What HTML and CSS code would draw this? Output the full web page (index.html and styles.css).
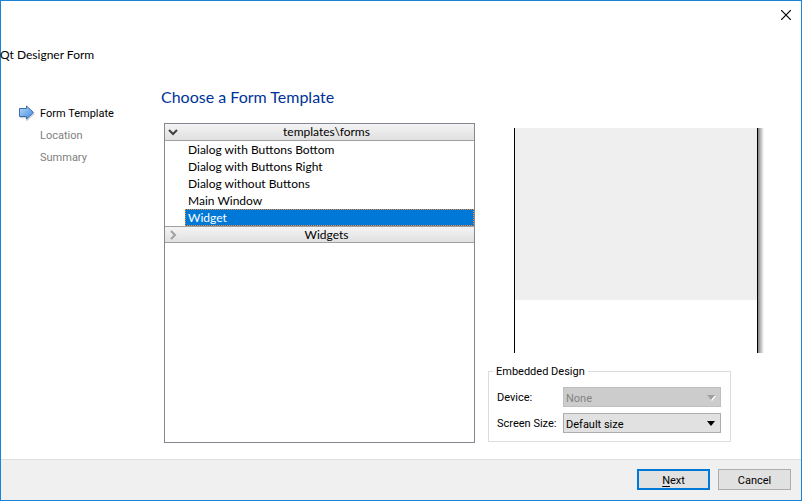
FILE: index.html
```html
<!DOCTYPE html>
<html lang="en">
<head>
<meta charset="utf-8">
<title>Qt Designer Form</title>
<link rel="stylesheet" href="styles.css">
</head>
<body>
<div class="window">
  <header class="titlebar">
    <button class="close" type="button" aria-label="Close">
      <svg width="10" height="10" viewBox="0 0 10 10" aria-hidden="true"><path d="M0 0L10 10M10 0L0 10" stroke="#000" stroke-width="1.2"/></svg>
    </button>
  </header>
  <h1 class="wizard-title">Qt Designer Form</h1>
  <div class="body">
    <nav class="steps">
      <ol>
        <li class="current">
          <svg class="step-arrow" width="18" height="16" viewBox="0 0 18 16" aria-hidden="true">
            <defs><linearGradient id="blue" x1="0" y1="0" x2="1" y2="1"><stop offset="0" stop-color="#b5dafb"/><stop offset="1" stop-color="#4087e2"/></linearGradient></defs>
            <path d="M2 12.5H9V15L16.500 8.500" fill="none" stroke="#d0d0d0" stroke-width="1.500"/>
            <path d="M1.500 3.500H8.500V1L15.500 7.500L8.500 14V11.500H1.500Z" fill="url(#blue)" stroke="#3a6ea8"/>
          </svg>
          Form Template
        </li>
        <li>Location</li>
        <li>Summary</li>
      </ol>
    </nav>
    <main class="page">
      <h2 class="page-title">Choose a Form Template</h2>
      <div class="columns">
        <div class="tree">
          <button class="group" type="button" aria-expanded="true">
            <svg class="chevron" width="10" height="10" viewBox="0 0 10 10" aria-hidden="true"><path d="M1 3L5 7L9 3" fill="none" stroke="#404040" stroke-width="2"/></svg>
            templates\forms
          </button>
          <ul class="items">
            <li>Dialog with Buttons Bottom</li>
            <li>Dialog with Buttons Right</li>
            <li>Dialog without Buttons</li>
            <li>Main Window</li>
            <li class="selected">Widget</li>
          </ul>
          <button class="group second" type="button" aria-expanded="false">
            <svg class="chevron" width="10" height="10" viewBox="0 0 10 10" aria-hidden="true"><path d="M3 1L7 5L3 9" fill="none" stroke="#a0a0a0" stroke-width="2"/></svg>
            Widgets
          </button>
        </div>
        <div class="side">
          <div class="preview"><div class="preview-form"></div><div class="preview-shadow"></div></div>
          <fieldset class="embedded">
            <legend>Embedded Design</legend>
            <label for="device">Device:</label>
            <div class="combo disabled">
              <select id="device" disabled><option>None</option></select>
              <svg class="drop" width="9" height="6" viewBox="0 0 9 6" aria-hidden="true"><path d="M1 1H9L5 6Z" fill="#fff"/><path d="M0 0H8L4 5Z" fill="#a0a0a0"/></svg>
            </div>
            <label for="size">Screen Size:</label>
            <div class="combo">
              <select id="size"><option>Default size</option></select>
              <svg class="drop" width="9" height="6" viewBox="0 0 9 6" aria-hidden="true"><path d="M0 0H8L4 5Z" fill="#000"/></svg>
            </div>
          </fieldset>
        </div>
      </div>
    </main>
  </div>
  <footer class="footer">
    <button class="btn primary" type="button"><u>N</u>ext</button>
    <button class="btn" type="button">Cancel</button>
  </footer>
</div>
</body>
</html>
```
FILE: styles.css
```css
* { box-sizing: border-box; }
body {
  margin: 0;
  background: #fff;
  color: #000;
  font: 11px/22px Tahoma, Roboto, sans-serif;
}
button, select { font: inherit; color: inherit; }
.window {
  display: flex;
  flex-direction: column;
  min-height: 100vh;
  border: 1px solid #1883d7;
}
.titlebar {
  display: flex;
  justify-content: flex-end;
  height: 44px;
  padding: 4px 5px;
}
.close {
  display: grid;
  place-items: center;
  width: 20px;
  height: 20px;
  padding: 0;
  border: 0;
  background: none;
}
.wizard-title {
  margin: 0 0 0 -1px;
  font: 12px/20px "Segoe UI", Lato, sans-serif;
}
.body { display: flex; flex: 1; }
.steps { width: 160px; padding-top: 38px; }
.steps ol { margin: 0; padding: 0 0 0 39px; list-style: none; }
.steps li { position: relative; color: #808080; }
.steps .current { color: #000; }
.step-arrow { position: absolute; left: -22px; top: 2px; }
.page {
  display: flex;
  flex-direction: column;
  flex: 1;
  padding-bottom: 16px;
}
.page-title {
  margin: 0;
  padding: 20px 0 14px;
  color: #003399;
  font: 16px/24px "Segoe UI", Lato, sans-serif;
}
.columns { display: flex; flex: 1; gap: 13px; padding: 0 37px 0 3px; }
.tree {
  flex: 1;
  border: 1px solid #828790;
  font: 12px/17px "Segoe UI", Lato, sans-serif;
}
.group {
  position: relative;
  display: block;
  width: 100%;
  height: 17px;
  padding: 0 0 0 14px;
  border: 0;
  border-bottom: 1px solid #a0a0a0;
  background: linear-gradient(#f4f4f4, #e0e0e0);
  line-height: 16px;
  text-align: center;
}
.group.second { border-top: 1px solid #a0a0a0; line-height: 15px; }
.chevron { position: absolute; left: 3px; top: 3px; }
.items { margin: 0; padding: 0 0 0 20px; list-style: none; }
.items li { height: 17px; padding-left: 3px; }
.items .selected {
  background: #0078d7;
  color: #fff;
  outline: 1px dotted #ff8728;
  outline-offset: -1px;
}
.side { width: 276px; padding-top: 5px; }
.preview {
  display: flex;
  height: 225px;
  margin: 0 0 12px 26px;
}
.preview-form {
  flex: 1;
  border: solid #000;
  border-width: 0 1px;
  background: linear-gradient(#efefef 172px, #fff 172px);
}
.preview-shadow {
  width: 6px;
  background: linear-gradient(90deg, #858585, #fff);
}
.embedded {
  display: grid;
  grid-template-columns: 58px 1fr;
  gap: 6px 8px;
  margin: 0 33px 0 0;
  padding: 10px 9px 8px 8px;
  border: 1px solid #dcdcdc;
  line-height: 20px;
}
.embedded legend {
  height: 12px;
  margin-left: -4px;
  padding: 0 3px;
  line-height: 14px;
}
.embedded label { height: 20px; line-height: 22px; white-space: nowrap; }
.combo { position: relative; }
.combo select {
  display: block;
  width: 100%;
  height: 20px;
  padding: 1px 2px 0;
  border: 1px solid #adadad;
  border-radius: 0;
  background: #e1e1e1;
  appearance: none;
}
.combo.disabled select {
  border-color: #bfbfbf;
  background: #ccc;
  color: #838383;
  opacity: 1;
}
.drop { position: absolute; right: 5px; top: 8px; pointer-events: none; }
.footer {
  display: flex;
  justify-content: flex-end;
  gap: 8px;
  padding: 9px 10px 10px;
  border-top: 1px solid #dfdfdf;
  background: #f0f0f0;
}
.btn {
  width: 73px;
  height: 21px;
  padding: 2px 0 0;
  border: 1px solid #adadad;
  background: #e1e1e1;
  line-height: 15px;
}
.btn.primary { border: 2px solid #0078d7; }
.btn u { text-underline-offset: 2px; }
```
